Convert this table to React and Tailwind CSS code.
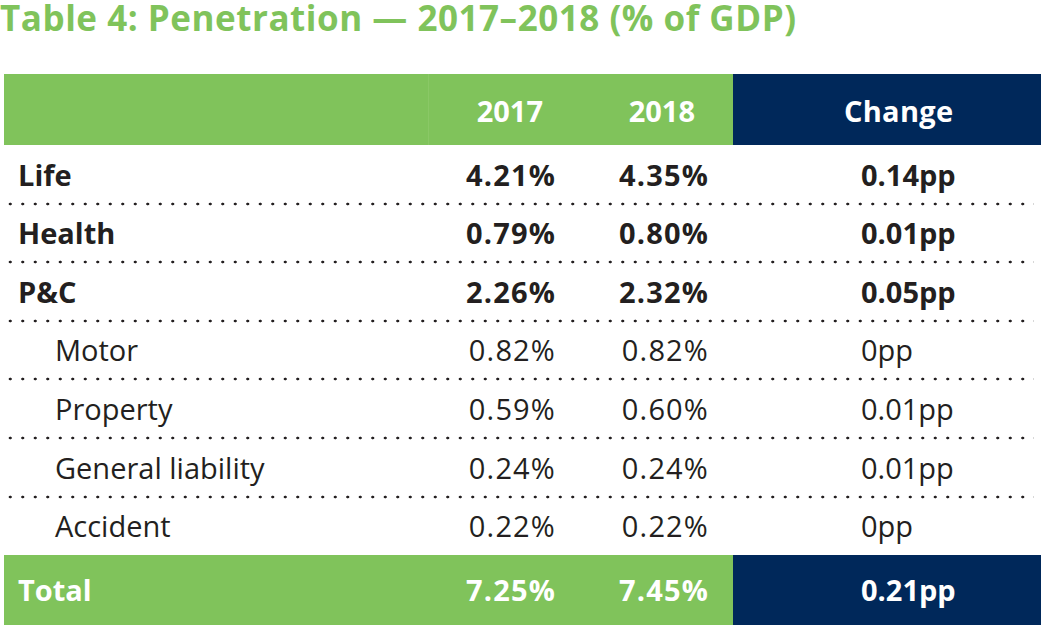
import React from "react";

const rows = [
  { label: "Life", a: "4.21%", b: "4.35%", c: "0.14pp", bold: true },
  { label: "Health", a: "0.79%", b: "0.80%", c: "0.01pp", bold: true },
  { label: "P&C", a: "2.26%", b: "2.32%", c: "0.05pp", bold: true },
  { label: "Motor", a: "0.82%", b: "0.82%", c: "0pp" },
  { label: "Property", a: "0.59%", b: "0.60%", c: "0.01pp" },
  { label: "General liability", a: "0.24%", b: "0.24%", c: "0.01pp" },
  { label: "Accident", a: "0.22%", b: "0.22%", c: "0pp", last: true },
];

const Dots = () => (
  <div className="h-[4px] w-[1030px] bg-[radial-gradient(circle,#231f20_1.2px,transparent_1.7px)] bg-[length:12.5px_4px] bg-repeat-x" />
);

const App = () => {
  return (
    <div className="w-[1047px] h-[632px] bg-white font-['Open_Sans',sans-serif] text-[#231f20]">
      <div className="h-[36px] leading-[35px] text-[35px] font-bold tracking-[0.015em] text-[#80c35b] whitespace-nowrap">
        Table 4: Penetration — 2017–2018 (% of GDP)
      </div>

      <div className="mt-[38px] ml-[4px] w-[1037px]">
        {/* header */}
        <div className="flex h-[71px] items-center text-white text-[29px] font-bold">
          <div className="w-[424px] h-full bg-[#80c35b]" />
          <div className="w-[152px] h-full bg-[#80c35b] border-l border-[#8ac866] flex items-center justify-end pr-[37px] pt-[2px]">
            2017
          </div>
          <div className="w-[153px] h-full bg-[#80c35b] flex items-center justify-end pr-[38px] pt-[2px]">
            2018
          </div>
          <div className="w-[308px] h-full bg-[#00285a] flex items-center pl-[111px] pt-[2px] tracking-[0.01em]">
            Change
          </div>
        </div>

        {/* body */}
        {rows.map((r) => (
          <div key={r.label} className="relative h-[58.6px]">
            <div
              className={
                "flex h-full items-center text-[29px] " +
                (r.bold ? "font-bold" : "font-normal")
              }
            >
              <div className={"w-[424px] " + (r.bold ? "pl-[14px]" : "pl-[51px]")}>
                {r.label}
              </div>
              <div className="w-[152px] text-right pr-[24px] tracking-[0.04em]">{r.a}</div>
              <div className="w-[153px] text-right pr-[24px] tracking-[0.04em]">{r.b}</div>
              <div className="w-[308px] pl-[128px]">{r.c}</div>
            </div>
            {!r.last && (
              <div className="absolute left-0 bottom-[-2px]">
                <Dots />
              </div>
            )}
          </div>
        ))}

        {/* total */}
        <div className="flex h-[70px] items-center text-white text-[29px] font-bold">
          <div className="w-[424px] h-full bg-[#80c35b] flex items-center pl-[14px]">Total</div>
          <div className="w-[152px] h-full bg-[#80c35b] flex items-center justify-end pr-[24px] tracking-[0.04em]">
            7.25%
          </div>
          <div className="w-[153px] h-full bg-[#80c35b] flex items-center justify-end pr-[24px] tracking-[0.04em]">
            7.45%
          </div>
          <div className="w-[308px] h-full bg-[#00285a] flex items-center pl-[128px]">0.21pp</div>
        </div>
      </div>
    </div>
  );
};

export default App;
